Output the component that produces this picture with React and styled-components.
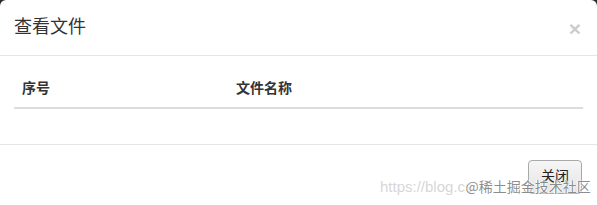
import React from "react";
import styled, { createGlobalStyle } from "styled-components";

const Global = createGlobalStyle`
  html, body { margin: 0; padding: 0; background: #2b2b2b; }
  body {
    font-family: "Liberation Sans", Arial, "Noto Sans CJK SC", sans-serif;
    font-size: 14px;
    line-height: 1.42857;
    color: #333;
  }
  * { box-sizing: border-box; }
`;

const Modal = styled.div`
  position: relative;
  width: 597px;
  height: 205px;
  background: #fff;
  border-radius: 6px 6px 0 0;
  overflow: hidden;
`;

const Header = styled.div`
  display: flex;
  align-items: center;
  justify-content: space-between;
  padding: 15px 15px 14px 14px;
  border-bottom: 1px solid #e5e5e5;
  height: 56px;
`;

const Title = styled.h4`
  margin: 0;
  font-size: 18px;
  font-weight: normal;
  color: #333;
  line-height: 1.42857;
`;

const Close = styled.button`
  border: 0;
  background: transparent;
  padding: 0;
  margin: 0 1px 0 0;
  font-size: 21px;
  font-weight: bold;
  line-height: 1;
  color: #000;
  opacity: 0.2;
  font-family: "Liberation Sans", Arial, sans-serif;
  cursor: pointer;
`;

const Body = styled.div`
  padding: 15px 14px 15px 14px;
`;

const Table = styled.table`
  width: 569px;
  border-collapse: collapse;
  margin-bottom: 20px;
`;

const Th = styled.th`
  text-align: left;
  padding: 8px;
  font-weight: bold;
  color: #333;
  border-bottom: 2px solid #ddd;
  width: ${(p) => p.$w || "auto"};
  line-height: 1.42857;
`;

const Footer = styled.div`
  display: flex;
  justify-content: flex-end;
  padding: 15px 15px;
  border-top: 1px solid #e5e5e5;
`;

const Button = styled.button`
  font-family: "Liberation Sans", Arial, "Noto Sans CJK SC", sans-serif;
  font-size: 14px;
  line-height: 1.42857;
  padding: 6px 12px;
  color: #222;
  background: linear-gradient(#f6f6f6, #e4e4e4);
  border: 1px solid #a9a9a9;
  border-radius: 4px;
  width: 54px;
  height: 34px;
`;

const Watermark = styled.div`
  position: absolute;
  left: 380px;
  top: 176px;
  display: flex;
  align-items: baseline;
  font-size: 15px;
  white-space: nowrap;
  pointer-events: none;
`;

const Url = styled.span`
  color: rgba(200, 200, 200, 0.75);
  font-family: "Liberation Sans", Arial, sans-serif;
`;

const Brand = styled.span`
  margin-left: -7px;
  color: rgba(120, 120, 120, 0.85);
  font-family: "Noto Sans CJK SC", sans-serif;
  font-size: 14px;
  text-shadow: 0 0 1px #fff, 1px 0 1px #fff, -1px 0 1px #fff;
`;

export default function App() {
  return (
    <>
      <Global />
      <Modal>
        <Header>
          <Title>查看文件</Title>
          <Close aria-label="Close">×</Close>
        </Header>
        <Body>
          <Table>
            <thead>
              <tr>
                <Th $w="214px">序号</Th>
                <Th>文件名称</Th>
              </tr>
            </thead>
            <tbody />
          </Table>
        </Body>
        <Footer>
          <Button>关闭</Button>
        </Footer>
        <Watermark>
          <Url>https://blog.cs</Url>
          <Brand>@稀土掘金技术社区</Brand>
        </Watermark>
      </Modal>
    </>
  );
}
